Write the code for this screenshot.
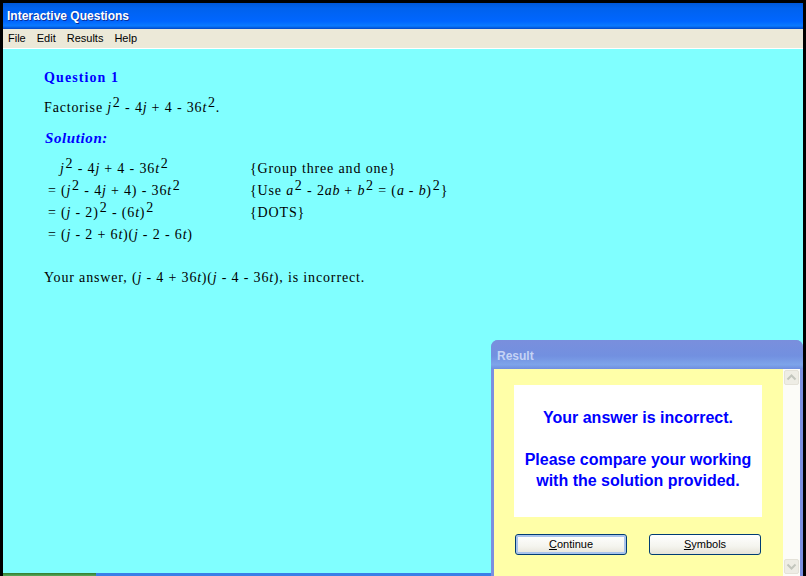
<script>
  const lines = [
    ['', 'j', '2', ' − 4', 'j', ' + 4 − 36', 't', '2']
  ];
</script>

<div class="screen">
  <header class="title">Interactive Questions</header>
  <nav class="menu"><span>File</span><span>Edit</span><span>Results</span><span>Help</span></nav>
  <main class="page">
    <h1>Question 1</h1>
    <p class="q">Factorise <i>j</i><sup>2</sup> - 4<i>j</i> + 4 - 36<i>t</i><sup>2</sup>.</p>
    <h2>Solution:</h2>
    <div class="work">
      <div class="eq first"><i>j</i><sup>2</sup> - 4<i>j</i> + 4 - 36<i>t</i><sup>2</sup></div>
      <div class="why">{'{'}Group three and one{'}'}</div>
      <div class="eq">= (<i>j</i><sup>2</sup> - 4<i>j</i> + 4) - 36<i>t</i><sup>2</sup></div>
      <div class="why">{'{'}Use <i>a</i><sup>2</sup> - 2<i>ab</i> + <i>b</i><sup>2</sup> = (<i>a</i> - <i>b</i>)<sup>2</sup>{'}'}</div>
      <div class="eq">= (<i>j</i> - 2)<sup>2</sup> - (6<i>t</i>)<sup>2</sup></div>
      <div class="why">{'{'}DOTS{'}'}</div>
      <div class="eq">= (<i>j</i> - 2 + 6<i>t</i>)(<i>j</i> - 2 - 6<i>t</i>)</div>
      <div class="why"></div>
    </div>
    <p class="ans">Your answer, (<i>j</i> - 4 + 36<i>t</i>)(<i>j</i> - 4 - 36<i>t</i>), is incorrect.</p>
  </main>
  <div class="taskbar"><div class="start"></div></div>

  <section class="dialog">
    <div class="dtitle">Result</div>
    <div class="dbody">
      <div class="content">
        <div class="msg">
          <p>Your answer is incorrect.</p>
          <p>Please compare your working<br />with the solution provided.</p>
        </div>
        <div class="buttons">
          <button class="default"><u>C</u>ontinue</button>
          <button><u>S</u>ymbols</button>
        </div>
      </div>
      <div class="scroll">
        <div class="arrow">
          <svg width="11" height="7" viewBox="0 0 11 7"><path d="M1.5 5.5 5.5 1.5 9.5 5.5" fill="none" stroke="#c3c6bd" stroke-width="2" /></svg>
        </div>
        <div class="arrow">
          <svg width="11" height="7" viewBox="0 0 11 7"><path d="M1.5 1.5 5.5 5.5 9.5 1.5" fill="none" stroke="#c3c6bd" stroke-width="2" /></svg>
        </div>
      </div>
    </div>
  </section>
</div>

<style>
  :global(body) { margin: 0; background: #000; }
  .screen {
    position: relative;
    width: 806px;
    height: 576px;
    box-sizing: border-box;
    padding: 3px 3px 0;
    background: #000;
    overflow: hidden;
    display: flex;
    flex-direction: column;
  }
  .title {
    height: 26px;
    flex: none;
    box-sizing: border-box;
    padding: 5px 0 0 4px;
    background: linear-gradient(180deg, #0058d8 0%, #0062ee 20%, #0066ff 70%, #0a7aff 88%, #0048c8 100%);
    color: #fff;
    font: bold 12px/16px "Liberation Sans", Arial, sans-serif;
    text-shadow: 1px 1px 0 #0a2f9c;
  }
  .menu {
    height: 19px;
    flex: none;
    display: flex;
    gap: 11px;
    padding-left: 5px;
    background: #ece9d8;
    border-bottom: 1px solid #fff;
    font: 11px/19px "Liberation Sans", Arial, sans-serif;
    color: #000;
  }
  .page {
    flex: 1;
    min-height: 0;
    background: #80ffff;
    padding: 20px 0 0 41px;
    font-family: "Liberation Serif", "Times New Roman", serif;
    font-size: 14px;
    letter-spacing: 0.85px;
    color: #000;
  }
  h1 {
    margin: 0;
    font: bold 14px/17px "Liberation Serif", serif;
    letter-spacing: 1.1px;
    color: #0000ff;
  }
  .q { margin: 12px 0 0; line-height: 20px; height: 20px; }
  h2 {
    margin: 11px 0 0 1px;
    font: italic bold 15px/18px "Liberation Serif", serif;
    letter-spacing: 0.6px;
    color: #0000ff;
  }
  .work {
    display: grid;
    grid-template-columns: 206px auto;
    grid-auto-rows: 22px;
    margin-top: 11px;
    width: 500px;
  }
  .eq { padding-left: 4px; line-height: 22px; white-space: nowrap; }
  .eq.first { padding-left: 16px; }
  .why { line-height: 22px; white-space: nowrap; }
  .ans { margin: 21px 0 0; line-height: 22px; }
  sup { font-size: 14px; line-height: 0; vertical-align: 5px; margin-left: 1px; }
  i { letter-spacing: 0.6px; }
  .taskbar {
    height: 3px;
    flex: none;
    background: #3a7fe8;
  }
  .start {
    width: 93px;
    height: 3px;
    background: linear-gradient(180deg, #2f7d2f, #5aa85a);
  }
  .dialog {
    position: absolute;
    left: 491px;
    top: 340px;
    width: 312px;
    height: 236px;
    box-sizing: border-box;
    border-radius: 7px 7px 0 0;
    background: #7b8fe0;
    overflow: hidden;
  }
  .dtitle {
    height: 29px;
    box-sizing: border-box;
    padding: 9px 0 0 6px;
    background: linear-gradient(180deg, #7a8fdd 0%, #7290e0 55%, #7da4ea 85%, #6f8ee0 100%);
    color: #c5d3f5;
    font: bold 12px/15px "Liberation Sans", Arial, sans-serif;
  }
  .dbody {
    display: flex;
    height: 207px;
    margin: 0 3px;
    background: #ffffa8;
  }
  .content { flex: 1; padding: 16px 0 0 20px; min-width: 0; }
  .msg {
    width: 248px;
    height: 132px;
    box-sizing: border-box;
    padding-top: 22px;
    background: #fff;
    color: #0000ff;
    text-align: center;
    font: bold 16px/21px "Liberation Sans", Arial, sans-serif;
  }
  .msg p { margin: 0 0 21px; }
  .buttons {
    display: flex;
    gap: 22px;
    margin: 17px 0 0 1px;
  }
  button {
    width: 112px;
    height: 21px;
    padding: 0;
    box-sizing: border-box;
    border: 1px solid #003c74;
    border-radius: 3px;
    background: linear-gradient(180deg, #fff 0%, #f4f4ee 60%, #e6e3d8 100%);
    color: #000;
    font: 11px/17px "Liberation Sans", Arial, sans-serif;
  }
  button.default {
    box-shadow: inset 0 0 0 2px #a9c3ec;
  }
  .scroll {
    width: 17px;
    flex: none;
    background: #fcfcf8;
    display: flex;
    flex-direction: column;
    justify-content: space-between;
    padding-bottom: 1px;
    box-sizing: border-box;
  }
  .arrow {
    height: 15px;
    margin: 1px;
    box-sizing: border-box;
    background: #eeede5;
    border: 1px solid #e4e2d8;
    border-radius: 2px;
    display: flex;
    align-items: center;
    justify-content: center;
  }
</style>
